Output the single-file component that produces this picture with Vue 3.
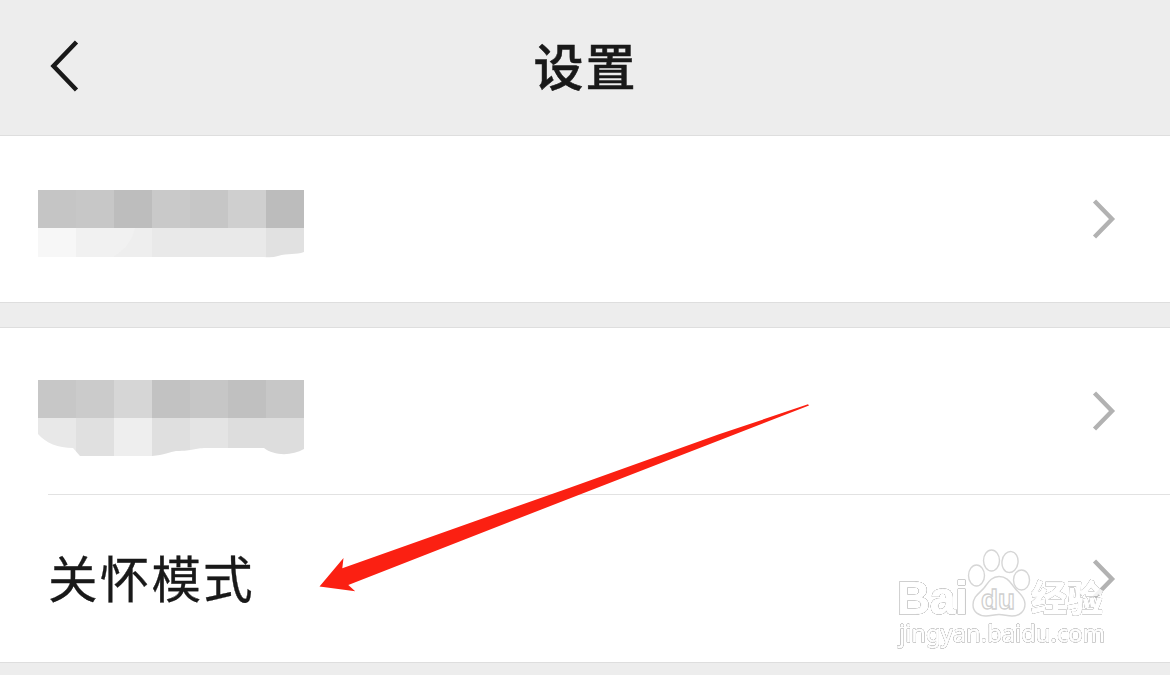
<script setup>
import { ref } from 'vue'

const title = ref('设置')

const groups = [
  [
    {
      id: 'first',
      clip: 'M0 0H266V62C258 65 250 63 240 66Q234 68 226 67H0Z',
      top: ['#c5c5c5', '#c7c7c7', '#bdbdbd', '#c9c9c9', '#c6c6c6', '#cfcfcf', '#bcbcbc'],
      bottom: ['#f7f7f7', '#f1f1f1', '#eeeeee', '#e9e9e9', '#e9e9e9', '#e9e9e9', '#e1e1e1']
    }
  ],
  [
    {
      id: 'second',
      clip: 'M0 0H266V69C254 76 236 76 226 68H168C156 68 156 71 138 71C132 72 126 75 114 76H42L35 68C20 68 8 63 0 54Z',
      top: ['#c7c7c7', '#cbcbcb', '#d6d6d6', '#c2c2c2', '#c6c6c6', '#c0c0c0', '#c7c7c7'],
      bottom: ['#e8e8e8', '#e0e0e0', '#eeeeee', '#dfdfdf', '#e4e4e4', '#dddddd', '#dddddd']
    },
    { id: 'care', label: '关怀模式' }
  ]
]
</script>

<template>
  <main class="settings">
    <header class="settings__header">
      <button type="button" class="settings__back" aria-label="返回">
        <svg width="30" height="54" viewBox="0 0 30 54">
          <path d="M27.5 3L4.5 27L27.5 51" />
        </svg>
      </button>
      <h1>{{ title }}</h1>
    </header>

    <section v-for="(group, index) in groups" :key="index" class="settings__group">
      <button v-for="item in group" :key="item.id" type="button" class="settings__cell">
        <span v-if="item.label" class="settings__label">{{ item.label }}</span>
        <svg v-else class="settings__mosaic" width="266" height="78" viewBox="0 0 266 78">
          <clipPath :id="`mask-${item.id}`">
            <path :d="item.clip" />
          </clipPath>
          <g :clip-path="`url(#mask-${item.id})`">
            <rect v-for="(fill, i) in item.top" :key="`t${i}`" :x="i * 38" y="0" width="38" height="38" :fill="fill" />
            <rect v-for="(fill, i) in item.bottom" :key="`b${i}`" :x="i * 38" y="38" width="38" height="40" :fill="fill" />
            <path v-if="item.id === 'first'" d="M76 38H97C94 50 88 59 76 66Z" fill="#f1f1f1" />
          </g>
        </svg>
        <svg class="settings__chevron" width="24" height="42" viewBox="0 0 24 42">
          <path d="M2.5 3L20 21L2.5 39" />
        </svg>
      </button>
    </section>

    <svg class="arrow" width="492" height="190" viewBox="0 0 492 190">
      <path d="M0.5 184.5L24.5 156L23.3 166.2L250 86L400 32.3L489 2.3L490 3.6L400 38.5L250 96.7L29.3 183L36.2 189.2Z" />
    </svg>

    <svg class="watermark" width="220" height="108" viewBox="890 545 220 108">
      <g class="watermark__shape">
        <ellipse cx="976.5" cy="575.5" rx="8" ry="10.5" />
        <ellipse cx="991.5" cy="560.5" rx="8" ry="10.5" />
        <ellipse cx="1010" cy="562" rx="8" ry="10.5" transform="rotate(8 1010 562)" />
        <ellipse cx="1021.5" cy="580" rx="8" ry="10" />
        <path d="M999 576.5C991 576.5 988 583 984 588C980 593 973 596 973 605C973 612 979 616 986 616C991 616 994 614.5 999 614.5C1004 614.5 1007 616 1012 616C1020 616 1025 611 1025 604C1025 596 1018 593 1014 587C1010 582 1007 576.5 999 576.5Z" />
      </g>
      <text class="watermark__text" x="897" y="614" font-size="46" textLength="71" lengthAdjust="spacingAndGlyphs">Bai</text>
      <text class="watermark__du" x="981" y="608.5" font-size="28" textLength="34" lengthAdjust="spacingAndGlyphs">du</text>
      <text class="watermark__text watermark__cjk" x="1031" y="611.5" font-size="36">经验</text>
      <text class="watermark__text watermark__url" x="899" y="642" font-size="24" textLength="206" lengthAdjust="spacingAndGlyphs">jingyan.baidu.com</text>
    </svg>
  </main>
</template>

<style>
body {
  margin: 0;
  overflow: hidden;
  background: #ededed;
}
</style>

<style scoped>
.settings {
  position: relative;
  height: 675px;
  overflow: hidden;
  background: #ededed;
  color: #191919;
  font-family: "Noto Sans CJK SC", "Noto Sans", sans-serif;
}

.settings button {
  border: none;
  background: none;
  color: inherit;
  font: inherit;
  cursor: pointer;
}

.settings__header {
  display: grid;
  grid-template-columns: 120px 1fr 120px;
  align-items: center;
  height: 135px;
}

.settings__header h1 {
  margin: 0;
  padding: 0 0 7px 1px;
  font-size: 50px;
  line-height: 72px;
  font-weight: 500;
  letter-spacing: 2px;
  text-align: center;
  -webkit-text-stroke: 0.5px #191919;
}

.settings__back {
  display: flex;
  padding: 0 0 4px 49px;
}

.settings__back path {
  fill: none;
  stroke: #191919;
  stroke-width: 4.5;
}

.settings__group {
  margin-bottom: 24px;
  border-top: 1px solid #dedede;
  border-bottom: 1px solid #dedede;
  background: #fff;
}

.settings__cell {
  box-sizing: border-box;
  display: flex;
  align-items: center;
  justify-content: space-between;
  width: 100%;
  height: 166px;
  padding: 0 54px 0 38px;
}

.settings__cell + .settings__cell {
  height: 168px;
  padding-top: 1px;
  padding-left: 48px;
  background: linear-gradient(#e2e2e2, #e2e2e2) 48px 0 / 100% 1px no-repeat;
}

.settings__mosaic {
  margin-top: 20px;
}

.settings__group + .settings__group .settings__mosaic {
  margin-top: 16px;
}

.settings__label {
  padding-bottom: 6px;
  font-size: 49.6px;
  line-height: 72px;
  letter-spacing: 2.1px;
  -webkit-text-stroke: 0.3px #191919;
}

.settings__chevron path {
  fill: none;
  stroke: #b2b2b2;
  stroke-width: 4.4;
}

.settings__cell + .settings__cell .settings__chevron {
  margin-top: 1px;
}

.arrow {
  position: absolute;
  top: 402px;
  left: 319px;
  fill: #fb2012;
  pointer-events: none;
}

.watermark {
  position: absolute;
  top: 545px;
  left: 890px;
  pointer-events: none;
  font-family: "Liberation Sans", Arial, sans-serif;
  font-weight: 700;
}

.watermark__shape {
  fill: #fff;
  stroke: #d6d6d6;
  stroke-width: 1.4;
}

/* white letters with a thin pale halo */
.watermark__text {
  fill: #fff;
  stroke: #fff;
  stroke-width: 1.2;
  stroke-linejoin: round;
  filter: drop-shadow(0 0 0.7px #777) drop-shadow(0 0 0.5px #aaa);
}

.watermark__du {
  fill: #fff;
  stroke: #cfcfcf;
  stroke-width: 1.3;
}

.watermark__cjk {
  opacity: 0.85;
  font-family: "Noto Sans CJK SC", sans-serif;
}

.watermark__url {
  stroke-width: 0.8;
  font-family: "Noto Sans", sans-serif;
  font-weight: 400;
}
</style>
